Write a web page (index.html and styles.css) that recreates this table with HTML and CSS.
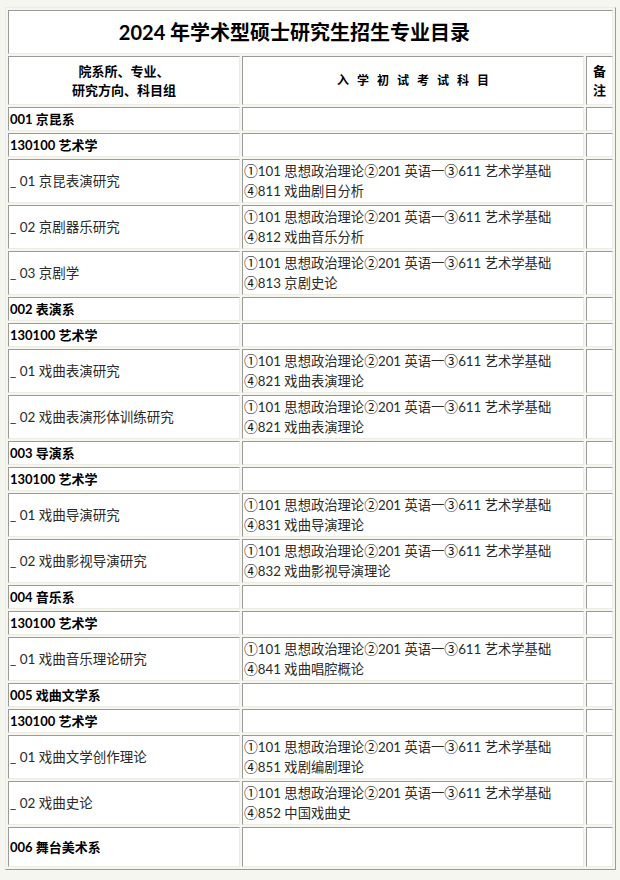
FILE: index.html
```html
<!DOCTYPE html>
<html lang="zh-CN">
<head>
<meta charset="utf-8">
<title>2024年学术型硕士研究生招生专业目录</title>
<link rel="stylesheet" href="styles.css">
</head>
<body>
<table class="catalog">
  <colgroup>
    <col class="c1">
    <col class="c2">
    <col class="c3">
  </colgroup>
  <tr class="r-title"><td colspan="3" class="title">2024 年学术型硕士研究生招生专业目录</td></tr>
  <tr class="r-head">
    <th class="h1">院系所、专业、<br>研究方向、科目组</th>
    <th class="h2"><span class="spaced">入学初试考试科目</span></th>
    <th class="h3">备<br>注</th>
  </tr>
  <tr class="s"><td class="b">001 京昆系</td><td></td><td></td></tr>
  <tr class="s"><td class="b">130100 艺术学</td><td></td><td></td></tr>
  <tr class="d"><td class="n">_ 01 京昆表演研究</td><td class="exam"><span class="o">①</span>101 思想政治理论<span class="o">②</span>201 英语一<span class="o">③</span>611 艺术学基础<br><span class="o">④</span>811 戏曲剧目分析</td><td></td></tr>
  <tr class="d"><td class="n">_ 02 京剧器乐研究</td><td class="exam"><span class="o">①</span>101 思想政治理论<span class="o">②</span>201 英语一<span class="o">③</span>611 艺术学基础<br><span class="o">④</span>812 戏曲音乐分析</td><td></td></tr>
  <tr class="d"><td class="n">_ 03 京剧学</td><td class="exam"><span class="o">①</span>101 思想政治理论<span class="o">②</span>201 英语一<span class="o">③</span>611 艺术学基础<br><span class="o">④</span>813 京剧史论</td><td></td></tr>
  <tr class="s"><td class="b">002 表演系</td><td></td><td></td></tr>
  <tr class="s"><td class="b">130100 艺术学</td><td></td><td></td></tr>
  <tr class="d"><td class="n">_ 01 戏曲表演研究</td><td class="exam"><span class="o">①</span>101 思想政治理论<span class="o">②</span>201 英语一<span class="o">③</span>611 艺术学基础<br><span class="o">④</span>821 戏曲表演理论</td><td></td></tr>
  <tr class="d"><td class="n">_ 02 戏曲表演形体训练研究</td><td class="exam"><span class="o">①</span>101 思想政治理论<span class="o">②</span>201 英语一<span class="o">③</span>611 艺术学基础<br><span class="o">④</span>821 戏曲表演理论</td><td></td></tr>
  <tr class="s"><td class="b">003 导演系</td><td></td><td></td></tr>
  <tr class="s"><td class="b">130100 艺术学</td><td></td><td></td></tr>
  <tr class="d"><td class="n">_ 01 戏曲导演研究</td><td class="exam"><span class="o">①</span>101 思想政治理论<span class="o">②</span>201 英语一<span class="o">③</span>611 艺术学基础<br><span class="o">④</span>831 戏曲导演理论</td><td></td></tr>
  <tr class="d"><td class="n">_ 02 戏曲影视导演研究</td><td class="exam"><span class="o">①</span>101 思想政治理论<span class="o">②</span>201 英语一<span class="o">③</span>611 艺术学基础<br><span class="o">④</span>832 戏曲影视导演理论</td><td></td></tr>
  <tr class="s"><td class="b">004 音乐系</td><td></td><td></td></tr>
  <tr class="s"><td class="b">130100 艺术学</td><td></td><td></td></tr>
  <tr class="d"><td class="n">_ 01 戏曲音乐理论研究</td><td class="exam"><span class="o">①</span>101 思想政治理论<span class="o">②</span>201 英语一<span class="o">③</span>611 艺术学基础<br><span class="o">④</span>841 戏曲唱腔概论</td><td></td></tr>
  <tr class="s"><td class="b">005 戏曲文学系</td><td></td><td></td></tr>
  <tr class="s"><td class="b">130100 艺术学</td><td></td><td></td></tr>
  <tr class="d"><td class="n">_ 01 戏曲文学创作理论</td><td class="exam"><span class="o">①</span>101 思想政治理论<span class="o">②</span>201 英语一<span class="o">③</span>611 艺术学基础<br><span class="o">④</span>851 戏剧编剧理论</td><td></td></tr>
  <tr class="d"><td class="n">_ 02 戏曲史论</td><td class="exam"><span class="o">①</span>101 思想政治理论<span class="o">②</span>201 英语一<span class="o">③</span>611 艺术学基础<br><span class="o">④</span>852 中国戏曲史</td><td></td></tr>
  <tr class="last"><td class="b">006 舞台美术系</td><td></td><td></td></tr>
</table>
</body>
</html>
```

FILE: styles.css
```css
html, body {
  margin: 0;
  padding: 0;
  background: #f6f6f0;
}

body {
  font-family: Lato, "Noto Sans CJK SC", sans-serif;
  color: #222;
}

.catalog {
  margin: 7px 0 0 5px;
  width: 611px;
  table-layout: fixed;
  border-collapse: separate;
  border-spacing: 2px;
  border: 1px solid;
  border-color: #ecece2 #9a9a9a #9a9a9a #ecece2;
  background: #f6f6f0;
}

.c1 { width: 232px; }
.c3 { width: 27px; }

.catalog td,
.catalog th {
  border: 1px solid;
  border-color: #9a9a9a #ecece2 #ecece2 #9a9a9a;
  background: #fff;
  padding: 1px;
  vertical-align: middle;
  font-size: 13.5px;
  line-height: 20px;
  white-space: nowrap;
}

.r-title { height: 44px; }
.r-head { height: 49px; }
.s { height: 24px; }
.d { height: 44px; }
.last { height: 40px; }

.catalog .title {
  text-align: center;
  font-size: 20px;
  font-weight: 700;
  color: #000;
  line-height: 24px;
  padding-right: 33px;
}

.catalog th {
  font-weight: 700;
  color: #000;
  text-align: center;
}

.catalog .h1 {
  font-size: 13px;
  line-height: 19px;
}

.catalog .h2 {
  font-size: 12px;
}

.spaced {
  letter-spacing: 8px;
  margin-right: -8px;
}

.catalog .h3 {
  font-size: 13px;
  line-height: 19px;
  padding: 0;
}

.catalog .b {
  font-weight: 700;
  font-size: 13px;
  color: #000;
}

.catalog .n {
  color: #2a2a2a;
}

.catalog .exam {
  color: #2a2a2a;
  font-size: 13.3px;
}

.o {
  font-family: "Noto Sans CJK SC", sans-serif;
  font-size: 13.8px;
  line-height: 17px;
  color: #111;
}
```
